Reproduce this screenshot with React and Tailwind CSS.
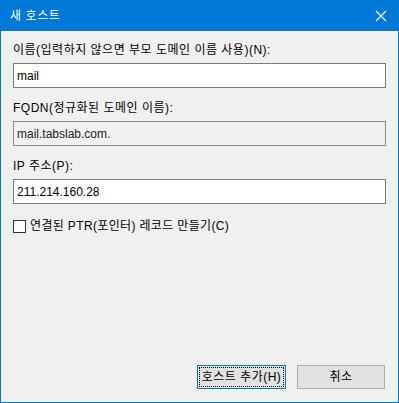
import React from "react";

const font = { fontFamily: '"Liberation Sans", "Noto Sans CJK KR", sans-serif' };

const Field = ({ label, value, disabled, className = "" }) => (
  <div className={"flex flex-col " + className}>
    <label className="text-[12px] leading-[16px] text-black tracking-[0.5px]">{label}</label>
    <div
      className={
        "mt-[5px] h-[25px] w-full border flex items-center px-[3px] text-[12px] " +
        (disabled
          ? "bg-[#f0f0f0] border-[#8a8a8a] text-[#222222]"
          : "bg-white border-[#7a7a7a] text-black")
      }
    >
      {value}
    </div>
  </div>
);

const App = () => {
  return (
    <div
      className="w-[399px] h-[403px] flex flex-col bg-[#f0f0f0] border border-[#0078d7] select-none"
      style={font}
    >
      <div className="h-[30px] shrink-0 bg-[#0078d7] flex items-center justify-between pl-[9px] pr-[10px]">
        <span className="text-white text-[12px] tracking-[0.6px]">새 호스트</span>
        <svg width="12" height="12" viewBox="0 0 12 12" className="mr-[1px]">
          <path d="M1 1 L11 11 M11 1 L1 11" stroke="white" strokeWidth="1.2" />
        </svg>
      </div>

      <div className="flex-1 flex flex-col px-[12px] pt-[11px]">
        <Field label="이름(입력하지 않으면 부모 도메인 이름 사용)(N):" value="mail" />
        <Field
          label="FQDN(정규화된 도메인 이름):"
          value="mail.tabslab.com."
          disabled
          className="mt-[12px]"
        />
        <Field label="IP 주소(P):" value="211.214.160.28" className="mt-[12px]" />

        <div className="mt-[14px] flex items-center gap-[4px]">
          <div className="w-[13px] h-[13px] border border-[#333333] bg-white" />
          <span className="text-[12px] text-black leading-[16px] tracking-[0.35px]">
            연결된 PTR(포인터) 레코드 만들기(C)
          </span>
        </div>

        <div className="mt-auto mb-[13px] flex justify-end gap-[11px] pr-[1px]">
          <button className="w-[89px] h-[24px] bg-[#e1e1e1] border border-[#0078d7] p-[1px] text-[12px] text-black tracking-[0.5px]">
            <span className="w-full h-full flex items-center justify-center outline outline-1 outline-dotted outline-black -outline-offset-1">
              호스트 추가(H)
            </span>
          </button>
          <button className="w-[88px] h-[24px] bg-[#e1e1e1] border border-[#adadad] text-[12px] text-black flex items-center justify-center tracking-[0.5px]">
            취소
          </button>
        </div>
      </div>
    </div>
  );
};

export default App;
